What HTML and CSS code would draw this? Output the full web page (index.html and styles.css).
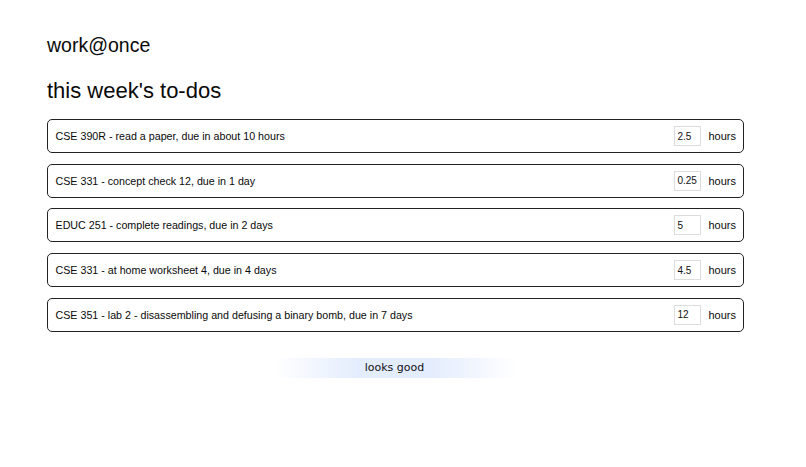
FILE: index.html
```html
<!DOCTYPE html>
<html>
<head>
<meta charset="utf-8">
<link rel="stylesheet" href="styles.css">
</head>
<body>
<div class="page">
  <div class="brand">work@once</div>
  <h1 class="heading">this week's to-dos</h1>
  <div class="list">
    <div class="row"><span class="task">CSE 390R - read a paper, due in about 10 hours</span><span class="est"><input class="hours-in" value="2.5"><span class="unit">hours</span></span></div>
    <div class="row"><span class="task">CSE 331 - concept check 12, due in 1 day</span><span class="est"><input class="hours-in" value="0.25"><span class="unit">hours</span></span></div>
    <div class="row"><span class="task">EDUC 251 - complete readings, due in 2 days</span><span class="est"><input class="hours-in" value="5"><span class="unit">hours</span></span></div>
    <div class="row"><span class="task">CSE 331 - at home worksheet 4, due in 4 days</span><span class="est"><input class="hours-in" value="4.5"><span class="unit">hours</span></span></div>
    <div class="row"><span class="task">CSE 351 - lab 2 - disassembling and defusing a binary bomb, due in 7 days</span><span class="est"><input class="hours-in" value="12"><span class="unit">hours</span></span></div>
  </div>
  <div class="actions"><button class="confirm">looks good</button></div>
</div>
</body>
</html>
```
FILE: styles.css
```css
html, body {
  margin: 0;
  padding: 0;
  background: #fff;
}
body {
  font-family: "Liberation Sans", Arial, sans-serif;
  color: #0a0a0a;
}
.page {
  padding: 33px 62px 0 47px;
}
.brand {
  font-size: 19.5px;
  line-height: 24px;
}
.heading {
  font-weight: normal;
  font-size: 22px;
  line-height: 26px;
  margin: 21px 0 0 0;
}
.list {
  margin-top: 15px;
  display: flex;
  flex-direction: column;
  gap: 10.7px;
}
.row {
  display: flex;
  align-items: center;
  justify-content: space-between;
  height: 34px;
  box-sizing: border-box;
  border: 1.5px solid #222;
  border-radius: 5px;
  padding: 0 7px 0 7.5px;
  font-size: 10.7px;
}
.est {
  display: flex;
  align-items: center;
  gap: 7px;
}
.hours-in {
  width: 27px;
  height: 20px;
  box-sizing: border-box;
  border: 1px solid #ddd;
  padding: 0 2px;
  font-family: "Liberation Sans", Arial, sans-serif;
  font-size: 10px;
  color: #111;
  outline: none;
}
.unit {
  font-size: 11px;
}
.actions {
  display: flex;
  justify-content: center;
  margin-top: 26px;
  padding-right: 2px;
}
.confirm {
  width: 244px;
  height: 20px;
  border: none;
  background: linear-gradient(to right, rgba(220,232,252,0) 0%, #e4edfd 35%, #e4edfd 65%, rgba(220,232,252,0) 100%);
  font-family: "DejaVu Sans", Verdana, sans-serif;
  font-size: 11px;
  color: #111;
  padding: 0;
}
```
